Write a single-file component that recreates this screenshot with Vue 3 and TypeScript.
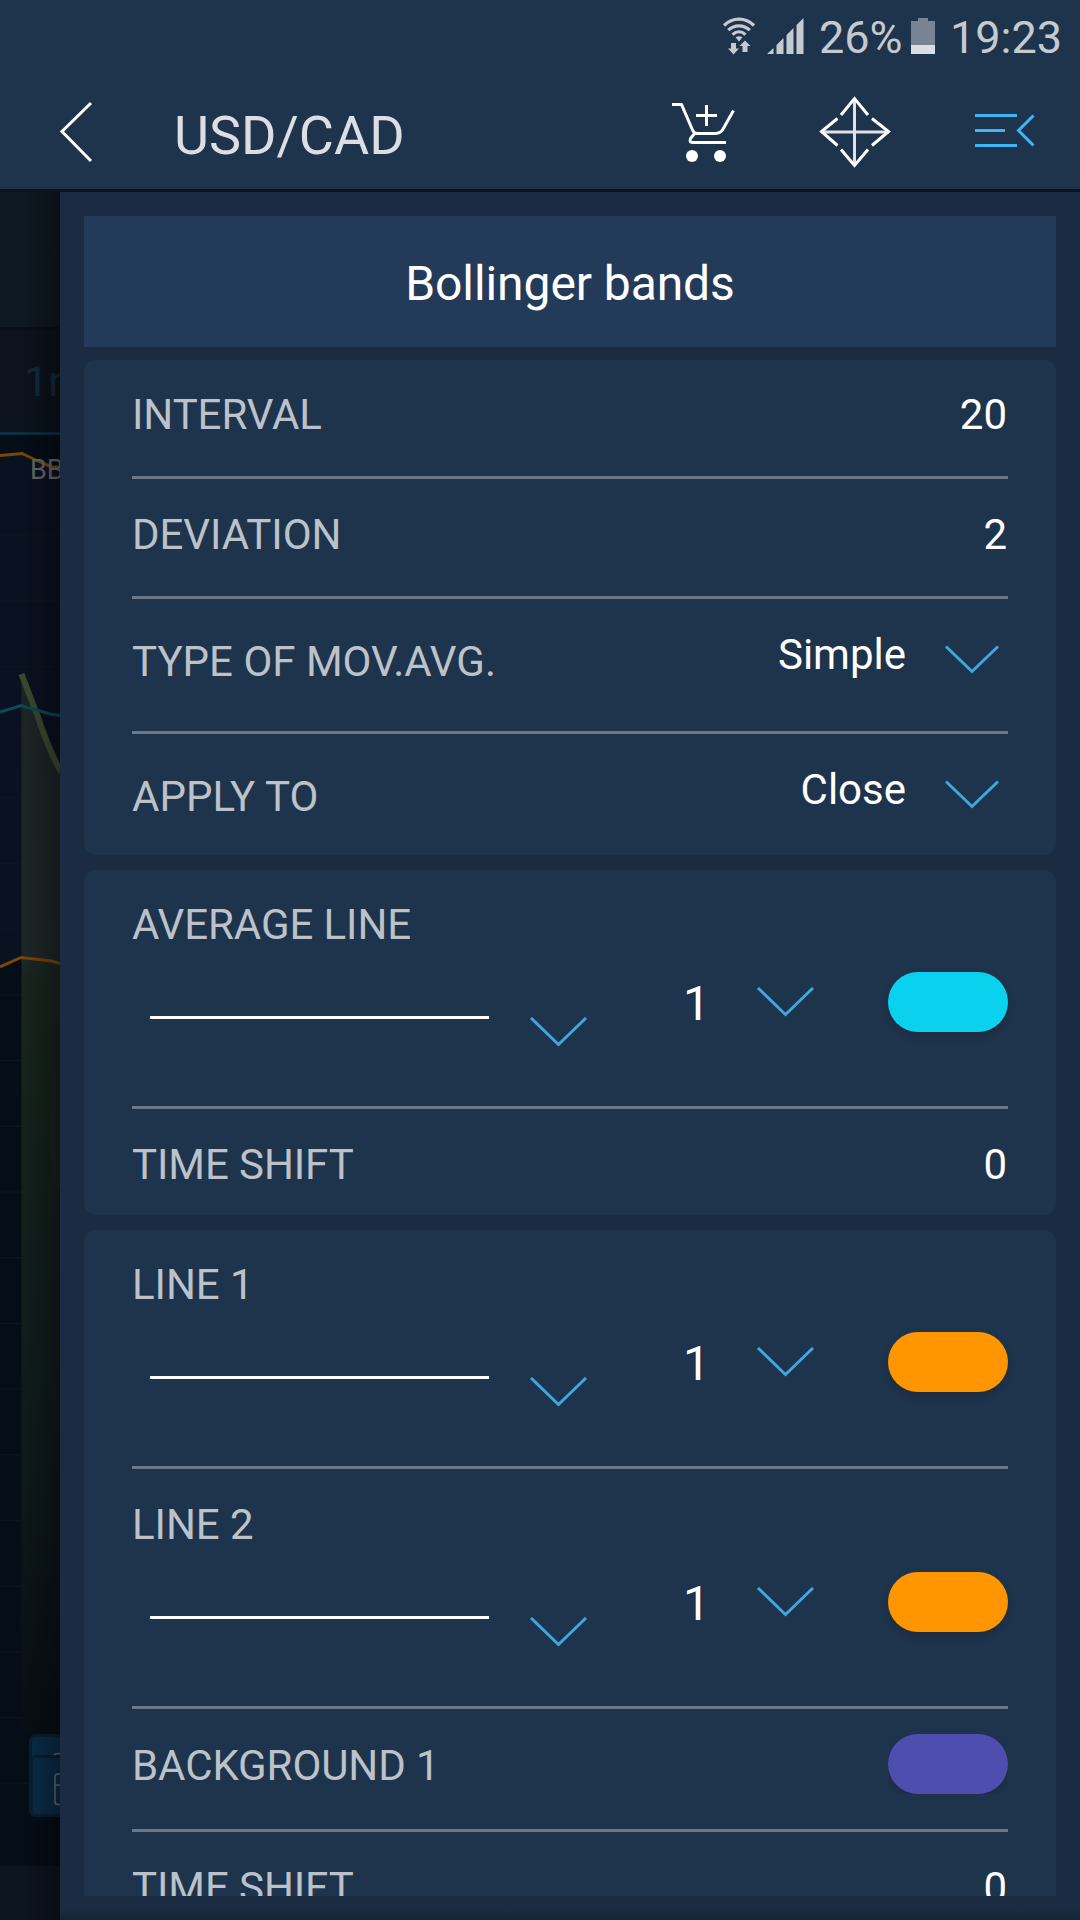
<script setup lang="ts">
interface LineSetting {
  label: string
  width: number
  color: string
}

const title = 'USD/CAD'
const averageLine: LineSetting = { label: 'AVERAGE LINE', width: 1, color: '#0ad2ee' }
const bandLines: LineSetting[] = [
  { label: 'LINE 1', width: 1, color: '#ff9500' },
  { label: 'LINE 2', width: 1, color: '#ff9500' },
]
const numbers = [
  { label: 'INTERVAL', value: 20 },
  { label: 'DEVIATION', value: 2 },
]
const selects = [
  { label: 'TYPE OF MOV.AVG.', value: 'Simple' },
  { label: 'APPLY TO', value: 'Close' },
]
const gridLines = Array.from({ length: 20 }, (_, i) => 343 + i * 65.7)
</script>

<template>
  <div class="screen">
    <div class="status">
      <svg class="wifi" width="34" height="40" viewBox="0 0 34 40">
        <g fill="none" stroke="#c5cad1" stroke-width="3.2">
          <path d="M2 9.5C10.500 1 23.500 1 32 9.500" />
          <path d="M6.200 14.200C12.500 8.300 21.500 8.300 27.800 14.200" />
          <path d="M10.500 18.600C14.500 15 19.500 15 23.500 18.600" />
        </g>
        <path d="M13.500 21.300Q17 19 20.500 21.300L17 25.500Z" fill="#c5cad1" />
        <path d="M9 27h5v5.500h3l-5.500 6L6 32.500h3zM20.500 36v-6H17.500L23 24.500l5.500 5.500h-3v6z" fill="#c5cad1" />
      </svg>
      <svg class="signal" width="38" height="37" viewBox="0 0 38 37">
        <path d="M0 36L6.500 30V36zM9.500 36V27L16.500 20V36zM19.500 36V17L26.500 10V36zM29.500 36V7L36.500 0V36z" fill="#c5cad1" />
      </svg>
      <span class="percent">26%</span>
      <svg class="battery" width="24" height="36" viewBox="0 0 24 36">
        <path d="M0 3H7V0H17V3H24V36H0z" fill="#788493" />
        <path d="M0 27H24V36H0z" fill="#dadde2" />
      </svg>
      <span class="clock">19:23</span>
    </div>

    <header class="bar">
      <svg class="back" width="36" height="64" viewBox="0 0 36 64">
        <path d="M33 3L4 31.500L33 61" fill="none" stroke="#fff" stroke-width="3" />
      </svg>
      <h1>{{ title }}</h1>
      <svg class="cart" width="66" height="62" viewBox="0 0 66 62" fill="none" stroke="#fff" stroke-width="3">
        <path d="M1 4.500H10.500L21.500 30Q23 33.500 26.500 33.500H45Q49 33.500 51.500 30L62.500 10.500M23.500 33.500L19.500 38.500Q18 42.500 21.500 42.500H55M25 15.500H46M35.500 5V26" />
        <circle cx="21" cy="56" r="6" fill="#fff" stroke="none" />
        <circle cx="49" cy="56" r="6" fill="#fff" stroke="none" />
      </svg>
      <svg class="move" width="72" height="72" viewBox="0 0 72 72" fill="none" stroke="#fff" stroke-width="3">
        <path d="M2 36H70M35.500 2V70" stroke="#dfe3e8" />
        <path d="M22 19L35.500 2.500L49 19M18.500 22.500L2.500 35.500L18.500 49.500M53 22.500L69.500 35.500L53 49.500M22 53.500L35.500 69.500L49 53.500" />
      </svg>
      <svg class="menu" width="62" height="36" viewBox="0 0 62 36" fill="none" stroke="#41b4f8" stroke-width="3">
        <path d="M0 3.500H42M0 18.500H30M0 33.500H42M58.500 3.500L43.500 18.500L58.500 33.500" />
      </svg>
    </header>

    <main class="body">
      <aside class="chart">
        <svg width="60" height="1728" viewBox="0 0 60 1728">
          <defs>
            <linearGradient id="area" x1="0" y1="0" x2="0" y2="1">
              <stop offset="0" stop-color="#1d2625" />
              <stop offset=".27" stop-color="#1e2728" />
              <stop offset=".29" stop-color="#19261f" />
              <stop offset=".45" stop-color="#14221c" />
              <stop offset=".75" stop-color="#0e1a1c" />
              <stop offset="1" stop-color="#070e15" />
            </linearGradient>
            <linearGradient id="edge">
              <stop offset="0" stop-color="#000" stop-opacity="0" />
              <stop offset="1" stop-color="#000" stop-opacity=".34" />
            </linearGradient>
          </defs>
          <rect width="60" height="1728" fill="#050d17" />
          <path d="M0 263L22 261L52 275H60V771L21 766L0 775Z" fill="#0a1120" />
          <rect width="60" height="135" fill="#0f1921" />
          <rect y="135" width="60" height="106" fill="#0c131c" />
          <rect y="135" width="60" height="3" fill="#0a1018" />
          <path v-for="y in gridLines" :key="y" :d="`M0 ${y}H60`" stroke="#101923" stroke-opacity=".6" stroke-width="1.500" />
          <text x="24" y="204" font-size="43" fill="#152a3c">1m</text>
          <path d="M21.500 482L48 552L60 576V1540H21.500Z" fill="url(#area)" />
          <path d="M51 876H60V998Q51 988 51 968Z" fill="#1b231e" />
          <path d="M0 241.500H60" stroke="#0a364b" stroke-width="2.500" />
          <path d="M0 263.500L22 261.500L40 270L52 275H60M0 775L21 765.500L52 769L60 771.500" fill="none" stroke="#7a4705" stroke-width="3" />
          <path d="M21.500 482L38 525Q48 556 61 580" fill="none" stroke="#3b4b2f" stroke-width="6" />
          <path d="M0 520L21 513.500L50 522L60 523.500" fill="none" stroke="#0b4a5b" stroke-width="3" />
          <text x="30" y="287" font-size="27" fill="#6b6b6b">BB</text>
          <g stroke="#0a2031" stroke-width="3">
            <rect x="30.500" y="1543.500" width="60" height="80" rx="5" fill="#0a2d4a" />
            <rect x="31.500" y="1564.500" width="60" height="59" rx="4" fill="#0a2d4a" />
          </g>
          <path d="M60 1582H58Q55 1582 55 1585V1610Q55 1612.500 58 1612.500H60M55 1593H60M54 1563Q55 1561.500 60 1561.500" fill="none" stroke="#6d6f72" stroke-width="1.500" />
          <rect y="1674" width="60" height="54" fill="#0d151f" />
          <rect x="20" width="40" height="1728" fill="url(#edge)" />
        </svg>
      </aside>

      <section class="drawer">
        <h2>Bollinger bands</h2>
        <div class="scroll">
          <div class="card">
            <div v-for="n in numbers" :key="n.label" class="row">
              <span class="label">{{ n.label }}</span>
              <span class="value">{{ n.value }}</span>
            </div>
            <div v-for="s in selects" :key="s.label" class="row select">
              <span class="label">{{ s.label }}</span>
              <span class="value">{{ s.value }}</span>
              <svg class="chev" width="56" height="30" viewBox="0 0 56 30"><path d="M2 1.500L28 26.500L54 1.500" /></svg>
            </div>
          </div>

          <div class="card">
            <div class="line">
              <span class="label">{{ averageLine.label }}</span>
              <div class="controls">
                <i class="stroke"></i>
                <svg class="chev style" width="58" height="30" viewBox="0 0 58 30"><path d="M2 1L29.500 27.500L57 1" /></svg>
                <span class="num">{{ averageLine.width }}</span>
                <svg class="chev" width="58" height="30" viewBox="0 0 58 30"><path d="M2 1L29.500 27.500L57 1" /></svg>
                <i class="pill" :style="{ background: averageLine.color }"></i>
              </div>
            </div>
            <div class="row last">
              <span class="label">TIME SHIFT</span>
              <span class="value">0</span>
            </div>
          </div>

          <div class="card">
            <div v-for="l in bandLines" :key="l.label" class="line">
              <span class="label">{{ l.label }}</span>
              <div class="controls">
                <i class="stroke"></i>
                <svg class="chev style" width="58" height="30" viewBox="0 0 58 30"><path d="M2 1L29.500 27.500L57 1" /></svg>
                <span class="num">{{ l.width }}</span>
                <svg class="chev" width="58" height="30" viewBox="0 0 58 30"><path d="M2 1L29.500 27.500L57 1" /></svg>
                <i class="pill" :style="{ background: l.color }"></i>
              </div>
            </div>
            <div class="row background">
              <span class="label">BACKGROUND 1</span>
              <div class="swatch"><i class="pill"></i></div>
            </div>
            <div class="row last">
              <span class="label">TIME SHIFT</span>
              <span class="value">0</span>
            </div>
          </div>
        </div>
      </section>
    </main>
  </div>
</template>

<style>
body {
  margin: 0;
  background: #1a2b42;
}
</style>

<style scoped>
.screen {
  display: flex;
  flex-direction: column;
  width: 1080px;
  height: 1920px;
  overflow: hidden;
  background: #1e344c;
  font-family: Roboto, sans-serif;
  color: #fff;
}
svg {
  display: block;
  flex: none;
}
.status {
  display: flex;
  height: 72px;
  color: #c5cad1;
  font-size: 45px;
  line-height: 52px;
}
.wifi {
  margin: 16px 0 0 722px;
}
.signal {
  margin: 18px 0 0 11px;
}
.percent {
  width: 92px;
  margin: 12px 0 0 14px;
}
.battery {
  margin: 18px 0 0;
}
.clock {
  margin: 12px 0 0 15px;
}
.bar {
  display: flex;
  height: 117px;
  border-bottom: 3px solid #0c1522;
}
.back {
  margin: 28px 0 0 58px;
}
h1 {
  width: 497px;
  margin: 32px 0 0 80px;
  font-size: 54px;
  line-height: 64px;
  font-weight: 400;
  color: #dbdee3;
}
.cart {
  margin: 28px 0 0;
}
.move {
  margin: 24px 0 0 82px;
}
.menu {
  margin: 40px 0 0 84px;
}
.body {
  display: flex;
  height: 1728px;
}
.chart {
  width: 60px;
  overflow: hidden;
}
.drawer {
  box-sizing: border-box;
  display: flex;
  flex-direction: column;
  width: 1020px;
  padding: 24px 24px;
  background: linear-gradient(#1a2b42 1718px, #162536 1728px);
}
h2 {
  height: 131px;
  margin: 0 0 13px;
  background: #233b59;
  text-align: center;
  font-size: 48px;
  font-weight: 400;
  line-height: 135px;
  letter-spacing: -0.08px;
}
.scroll {
  display: flex;
  flex: 1;
  flex-direction: column;
  gap: 15px;
  min-height: 0;
  overflow: hidden;
}
.card {
  flex: none;
  padding: 0 48px;
  border-radius: 12px;
  background: #1e344c;
}
.row {
  box-sizing: border-box;
  display: flex;
  justify-content: space-between;
  height: 119px;
  margin-bottom: 1px;
  padding-top: 30px;
  border-bottom: 3px solid #6a788a;
  font-size: 42px;
  line-height: 50px;
}
.label {
  color: #bcc2ca;
  font-size: 42px;
  line-height: 50px;
  letter-spacing: -0.08px;
}
.value {
  margin-right: 1px;
}
.row.select {
  height: 134px;
}
.row.select:last-child {
  height: 120px;
  margin: 0;
  border: 0;
}
.select .label {
  flex: 1;
  margin-top: 7px;
  letter-spacing: 0;
}
.select .chev {
  margin: 15px 8px 0 37px;
}
.row.last {
  height: 105px;
  margin: 0;
  border: 0;
}
.row.background {
  height: 122px;
  padding-top: 31px;
}
.chev path {
  fill: none;
  stroke: #3fa6de;
  stroke-width: 3;
}
.line {
  box-sizing: border-box;
  height: 239px;
  margin-bottom: 1px;
  padding-top: 30px;
  border-bottom: 3px solid #6a788a;
}
.line .label {
  display: block;
}
.controls {
  display: flex;
  margin-top: 22px;
}
.stroke {
  width: 339px;
  height: 3px;
  margin: 44px 40px 0 18px;
  background: #fff;
}
.controls .chev {
  margin-top: 15px;
}
.controls .chev.style {
  margin-top: 45px;
}
.num {
  width: 28px;
  margin: 4px 45px 0 96px;
  font-size: 48px;
  line-height: 56px;
}
.pill {
  display: block;
  width: 120px;
  height: 60px;
  border-radius: 30px;
  box-shadow: 0 4px 6px rgba(32, 36, 56, 0.6);
}
.controls .pill {
  margin-left: auto;
}
.swatch {
  height: 60px;
  margin-top: -7px;
  overflow: hidden;
}
.swatch .pill {
  background: #4e4eb1;
}
</style>
